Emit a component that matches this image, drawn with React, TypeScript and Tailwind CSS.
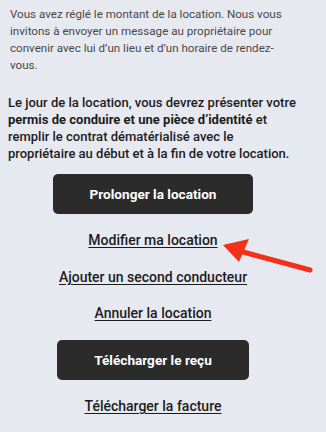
import React from "react";

export default function App() {
  return (
    <div
      className="relative w-[326px] h-[432px] overflow-hidden bg-[#e7e9f1]"
      style={{ fontFamily: 'Roboto, "Liberation Sans", sans-serif' }}
    >
      <div className="ml-[8px] w-[290px] pt-[6px] flex flex-col whitespace-nowrap">
        <p className="text-[11.6px] leading-[17px] text-[#474747] pl-[2px]">
          Vous avez réglé le montant de la location. Nous vous
          <br />
          invitons à envoyer un message au propriétaire pour
          <br />
          convenir avec lui d’un lieu et d’un horaire de rendez-
          <br />
          vous.
        </p>
        <p className="mt-[20px] text-[13px] leading-[17px] font-medium text-[#1c1c1c]">
          Le jour de la location, vous devrez présenter votre
          <br />
          <span className="font-bold">permis de conduire et une pièce d’identité</span> et
          <br />
          remplir le contrat dématérialisé avec le
          <br />
          propriétaire au début et à la fin de votre location.
        </p>
        <div className="mt-[12px] flex flex-col items-center text-[14px] leading-[17px] font-medium text-[#1c1c1c]">
          <button className="h-[40px] px-[37px] rounded-[5px] bg-[#2b2b2b] text-white font-bold text-[13.6px]">
            Prolonger la location
          </button>
          <a className="mt-[18px] underline underline-offset-2">Modifier ma location</a>
          <a className="mt-[20px] underline underline-offset-2">Ajouter un second conducteur</a>
          <a className="mt-[19px] underline underline-offset-2">Annuler la location</a>
          <button className="mt-[18px] h-[40px] px-[37px] rounded-[5px] bg-[#2b2b2b] text-white font-bold text-[13.6px]">
            Télécharger le reçu
          </button>
          <a className="mt-[18px] underline underline-offset-2">Télécharger la facture</a>
        </div>
      </div>
      <svg
        className="absolute left-0 top-0"
        width="326"
        height="432"
        viewBox="0 0 326 432"
      >
        <line x1="243" y1="252" x2="310" y2="270" stroke="#f2311a" strokeWidth="5" strokeLinecap="round" />
        <polygon points="223,245 249,239 239,262" fill="#f2311a" />
      </svg>
    </div>
  );
}
